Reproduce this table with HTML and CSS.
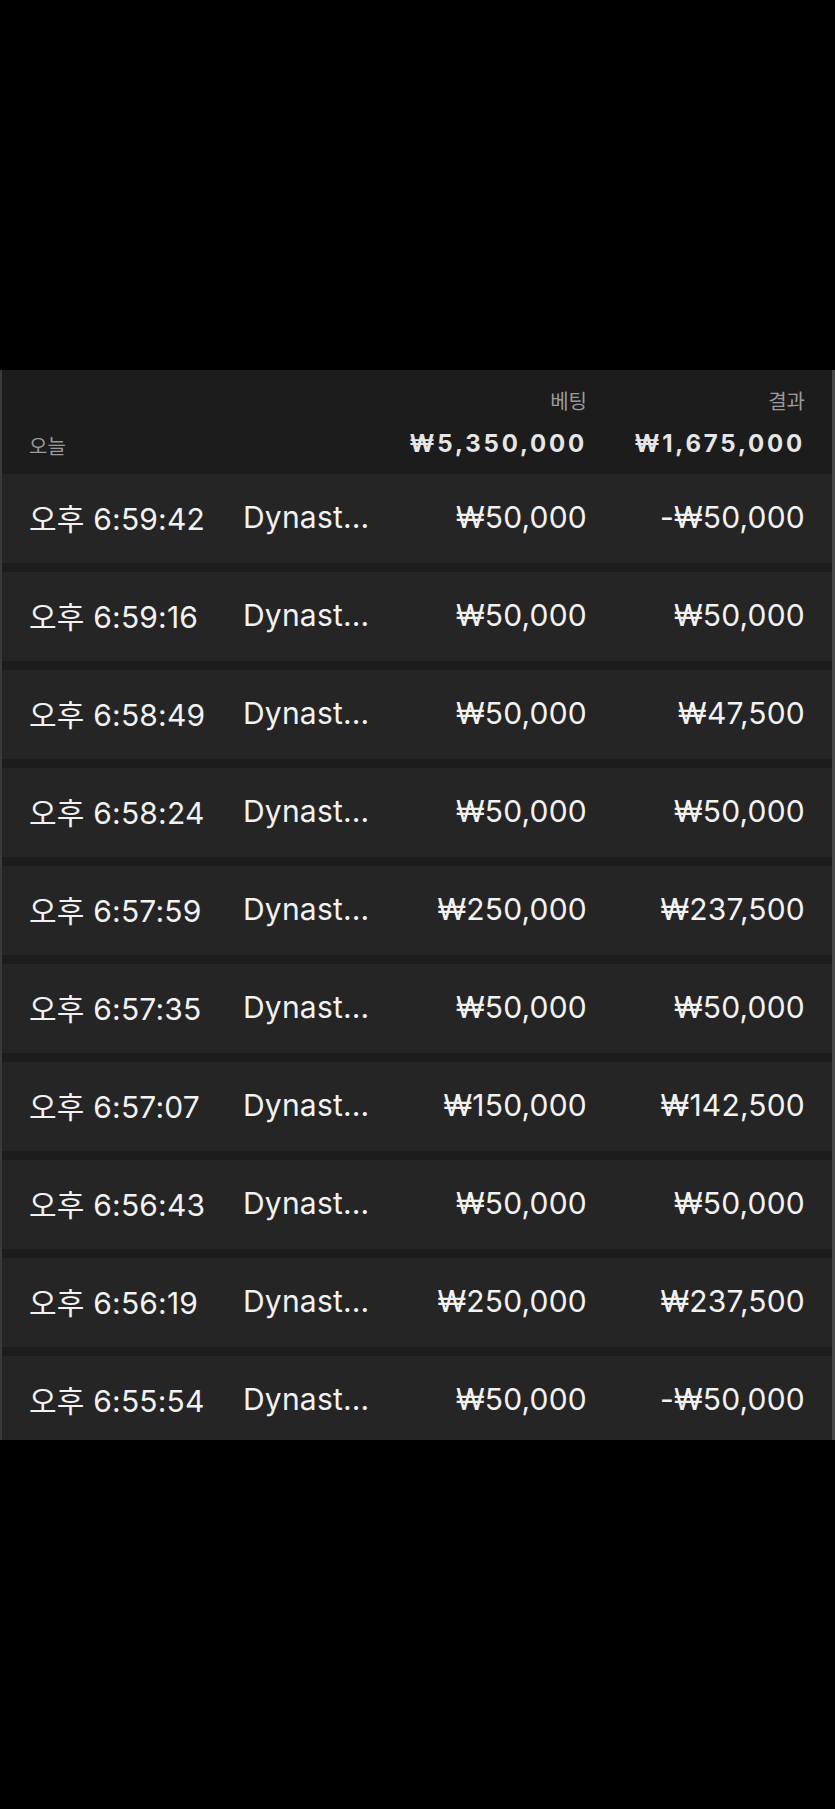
FILE: index.html
```html
<!DOCTYPE html>
<html lang="ko">
<head>
    <meta charset="UTF-8">
    <meta name="viewport" content="width=device-width, initial-scale=1.0">
    <title>베팅 내역</title>
    <link rel="stylesheet" href="styles.css">
</head>
<body>
    <div class="screen">
        <div class="panel">
            <!-- Summary header -->
            <div class="summary">
                <div class="label-row">
                    <span></span>
                    <span></span>
                    <span class="num">베팅</span>
                    <span class="num">결과</span>
                </div>
                <div class="total-row">
                    <span class="day">오늘</span>
                    <span></span>
                    <span class="num total">₩5,350,000</span>
                    <span class="num total">₩1,675,000</span>
                </div>
            </div>

            <!-- Bet list -->
            <div class="list">
                <div class="row">
                    <span>오후 6:59:42</span>
                    <span class="game">Dynast...</span>
                    <span class="num">₩50,000</span>
                    <span class="num">-₩50,000</span>
                </div>
                <div class="row">
                    <span>오후 6:59:16</span>
                    <span class="game">Dynast...</span>
                    <span class="num">₩50,000</span>
                    <span class="num">₩50,000</span>
                </div>
                <div class="row">
                    <span>오후 6:58:49</span>
                    <span class="game">Dynast...</span>
                    <span class="num">₩50,000</span>
                    <span class="num">₩47,500</span>
                </div>
                <div class="row">
                    <span>오후 6:58:24</span>
                    <span class="game">Dynast...</span>
                    <span class="num">₩50,000</span>
                    <span class="num">₩50,000</span>
                </div>
                <div class="row">
                    <span>오후 6:57:59</span>
                    <span class="game">Dynast...</span>
                    <span class="num">₩250,000</span>
                    <span class="num">₩237,500</span>
                </div>
                <div class="row">
                    <span>오후 6:57:35</span>
                    <span class="game">Dynast...</span>
                    <span class="num">₩50,000</span>
                    <span class="num">₩50,000</span>
                </div>
                <div class="row">
                    <span>오후 6:57:07</span>
                    <span class="game">Dynast...</span>
                    <span class="num">₩150,000</span>
                    <span class="num">₩142,500</span>
                </div>
                <div class="row">
                    <span>오후 6:56:43</span>
                    <span class="game">Dynast...</span>
                    <span class="num">₩50,000</span>
                    <span class="num">₩50,000</span>
                </div>
                <div class="row">
                    <span>오후 6:56:19</span>
                    <span class="game">Dynast...</span>
                    <span class="num">₩250,000</span>
                    <span class="num">₩237,500</span>
                </div>
                <div class="row">
                    <span>오후 6:55:54</span>
                    <span class="game">Dynast...</span>
                    <span class="num">₩50,000</span>
                    <span class="num">-₩50,000</span>
                </div>
            </div>
        </div>
    </div>
</body>
</html>
```

FILE: styles.css
```css
body {
    margin: 0;
    background: #000;
    font-family: Inter, "Noto Sans CJK KR", sans-serif;
    color: #f2f2f2;
}

.screen {
    height: 1809px;
    padding-top: 370px;
    box-sizing: border-box;
}

.panel {
    height: 1070px;
    overflow: hidden;
    background: #1c1c1c;
    border-left: 2px solid #3a3a3a;
    border-right: 3px solid #484848;
}

/* Shared column grid */
.label-row, .total-row, .row {
    display: grid;
    grid-template-columns: 214px 130px 214px 218px;
    padding: 0 27px;
    align-items: center;
}

.num {
    text-align: right;
    white-space: nowrap;
}

/* Summary header */
.summary {
    height: 104px;
    box-sizing: border-box;
    padding-top: 15px;
}

.label-row {
    font-size: 20px;
    color: #9a9a9a;
    height: 30px;
}

.total-row {
    height: 44px;
    margin-top: 6px;
}

.day {
    font-size: 20px;
    color: #9a9a9a;
    padding-top: 4px;
}

.total {
    font-size: 24px;
    font-weight: 700;
    letter-spacing: 2.8px;
    color: #e6e6e6;
}

/* Rows */
.row {
    height: 89px;
    box-sizing: border-box;
    padding-bottom: 3px;
    margin-bottom: 9px;
    background: #252525;
    font-size: 30px;
    letter-spacing: 0.2px;
}

.game {
    overflow: hidden;
    white-space: nowrap;
}
```
